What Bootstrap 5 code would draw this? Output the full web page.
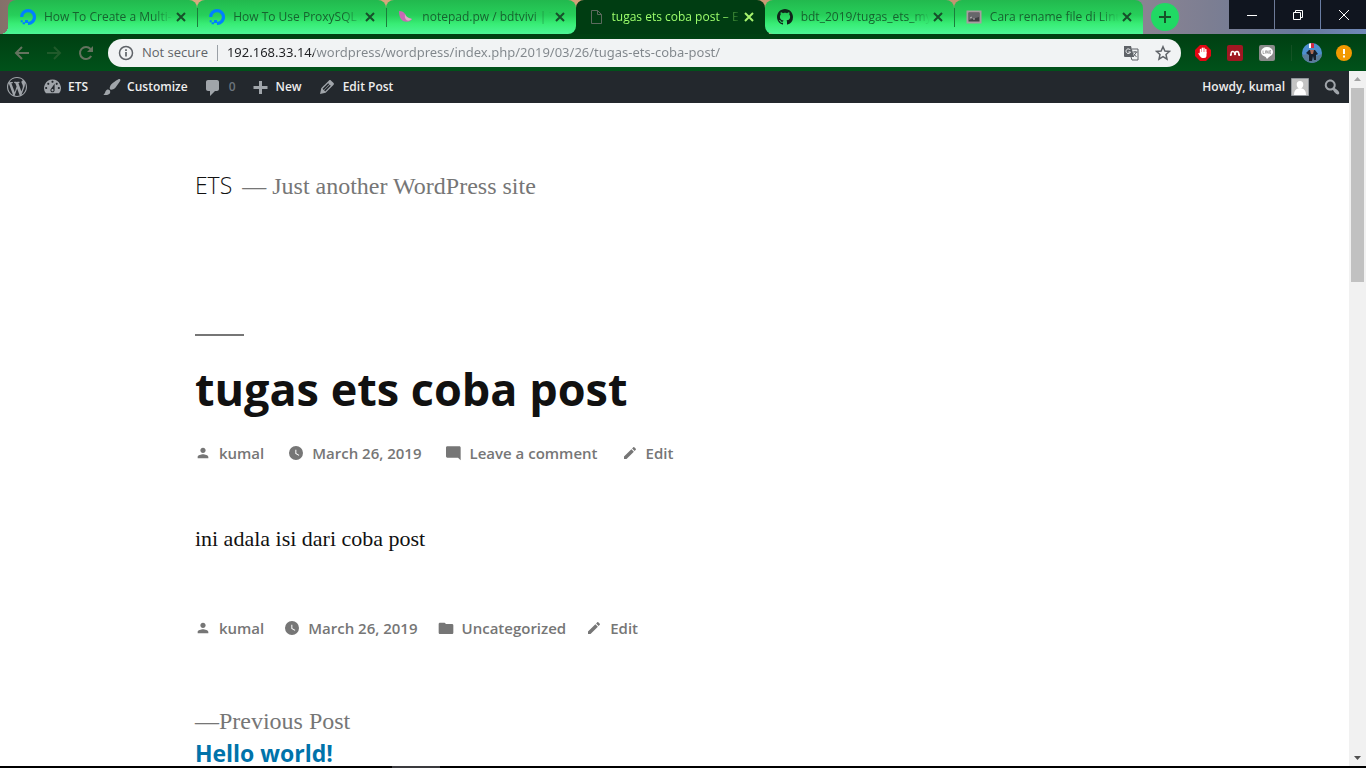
<!DOCTYPE html>
<html lang="en">
<head>
<meta charset="utf-8">
<meta name="viewport" content="width=device-width, initial-scale=1">
<title>tugas ets coba post – ETS</title>
<link rel="stylesheet" href="https://cdn.jsdelivr.net/npm/bootstrap@5.3.0/dist/css/bootstrap.min.css">
<style>
  :root { --ui: "Open Sans", "Noto Sans", sans-serif; --serif: "Liberation Serif", serif; --grey: #767676; }
  body { font-family: var(--ui); color: #111; }
  a { text-decoration: none; color: inherit; }
  button { border: 0; background: none; padding: 0; color: inherit; line-height: 1; }
  svg { display: block; flex: none; }

  .titlebar { height: 34px; padding-left: 8px; background: radial-gradient(circle at 0 0, transparent 8px, #48f08f 8px) 0 100% / 8px 8px no-repeat, linear-gradient(90deg, #84706a 0, #b08a6c 120px, #dcab80 200px, #d3a078 580px, #c49472 960px, #8b8493 1140px, #7c7e92 1210px, #68799b 1300px, #6f88b8 100%); }
  .strip { max-width: 1135px; min-width: 0; background: linear-gradient(transparent 50%, #003d12 50%) 50% 0 / 34% 34px no-repeat; }
  .tab-item { height: 34px; padding: 0 8px 0 12px; background: linear-gradient(#22b94e, #27cf5a 45%, #38ed75 70%, #4cf596); border-radius: 8px 8px 0 0; color: #17632f; font-size: 12px; min-width: 0; }
  .tab-item + .tab-item { background: linear-gradient(#1c7d3c, #1c7d3c) 0 8px / 1px 19px no-repeat, linear-gradient(#22b94e, #27cf5a 45%, #38ed75 70%, #4cf596); }
  .tab-item.before-current { border-bottom-right-radius: 8px; }
  .tab-item + .tab-item.current { background: #003d12; color: #9dff6d; }
  .tab-item + .tab-item.after-current { background: linear-gradient(#22b94e, #27cf5a 45%, #38ed75 70%, #4cf596); border-bottom-left-radius: 8px; }
  .tab-label { white-space: nowrap; overflow: hidden; margin-left: 8px; line-height: 20px; -webkit-mask-image: linear-gradient(90deg, #000 calc(100% - 20px), transparent); mask-image: linear-gradient(90deg, #000 calc(100% - 20px), transparent); }
  .tab-close { width: 16px; height: 16px; color: #17502a; display: grid; place-items: center; flex: none; }
  .current .tab-close { color: #a6f36e; }
  .tab-new { width: 28px; height: 28px; margin: 3px 0 0 8px; border-radius: 50%; background: #20d964; color: #175229; display: grid; place-items: center; flex: none; }
  .win-group { gap: 1px; }
  .win-btn { width: 45px; height: 29px; background: #10151f; color: #fff; display: grid; place-items: center; }

  .toolbar { height: 37px; background: linear-gradient(#003f12, #00521a); padding: 0 14px; color: #4f6e50; }
  .omnibox { height: 28px; border-radius: 14px; background: #f1f3f4; color: #5f6368; font-size: 14px; padding: 0 10px; margin: 0 14px; min-width: 0; }
  .omnibox .secure { font-size: 13px; white-space: nowrap; }
  .omnibox .rule { width: 1px; height: 16px; background: #9aa0a6; margin: 0 9px; }
  .omnibox input { border: 0; outline: 0; padding: 0; min-width: 0; font-family: "Noto Sans", sans-serif; font-size: 13px; color: transparent; background: linear-gradient(90deg, #202124 87px, #80868b 87px); -webkit-background-clip: text; background-clip: text; }
  .profile { margin: 0 14px 0 10px; }

  .pane { min-height: 0; }
  .adminbar { height: 32px; background: #23282d; color: #eee; font-size: 12px; font-weight: 600; padding: 0 8px 0 6px; }
  .adminbar svg { fill: #a0a5aa; }
  .adminbar a { display: flex; align-items: center; gap: 6px; white-space: nowrap; }
  .adminbar .menu { gap: 15px; }
  .adminbar .account { gap: 14px; }

  .site { padding: 65px 16px 0 calc(10% + 60px); min-height: 0; }
  .branding { line-height: 34px; color: var(--grey); margin-bottom: 131px; gap: 10px; }
  .branding a { color: #111; font-size: 23px; font-weight: 300; }
  .branding .tagline { font-family: var(--serif); font-size: 24px; }
  .dash { width: 49px; height: 2px; background: var(--grey); }
  .entry-title { font-size: 45px; line-height: 56px; font-weight: 700; margin: 25px 0 24px; }
  .meta { font-size: 15px; line-height: 24px; font-weight: 600; color: var(--grey); gap: 24px; }
  .meta.foot { gap: 20px; }
  .meta a { display: flex; align-items: center; gap: 8px; white-space: nowrap; }
  .meta svg { fill: var(--grey); }
  .entry-text { font-family: var(--serif); font-size: 22px; line-height: 32px; margin: 58px 0 61px; }
  .prev { margin-top: 65px; line-height: 32px; display: block; }
  .prev .kind { font-family: var(--serif); font-size: 24px; color: var(--grey); display: block; }
  .prev .name { font-size: 23px; font-weight: 700; color: #0073aa; }

  .scroll { width: 17px; background: #f1f1f1; padding: 6px 0; }
  .scroll .thumb { width: 13px; height: 194px; background: #c1c1c1; margin-top: 7px; }
  .taskline { height: 2px; background: #000; padding-left: 392px; flex: none; }
  .taskline i { display: block; width: 48px; height: 2px; background: #3a3a3e; }
</style>
</head>
<body class="vh-100 d-flex flex-column overflow-hidden">

<svg class="d-none">
  <symbol id="x" viewBox="0 0 10 10"><path d="M1 1l8 8M9 1L1 9" stroke="currentColor" stroke-width="2"/></symbol>
  <symbol id="ocean" viewBox="0 0 16 16"><path d="M8 14.400A6.400 6.400 0 1 0 1.700 8" fill="none" stroke="#0080ff" stroke-width="3.200"/><path d="M5 11h3v3H5zM2.600 13.300H5v2H2.600zM.7 11.200h2v2h-2z" fill="#0080ff"/></symbol>
  <symbol id="person" viewBox="0 0 24 24"><path d="M12 12c2.210 0 4-1.790 4-4s-1.790-4-4-4-4 1.790-4 4 1.790 4 4 4zm0 2c-2.670 0-8 1.340-8 4v2h16v-2c0-2.660-5.330-4-8-4z"/></symbol>
  <symbol id="clock" viewBox="0 0 24 24"><path fill-rule="evenodd" d="M12 1.500a10.500 10.500 0 1 0 0 21 10.500 10.500 0 0 0 0-21zM16.200 16.200L11 13V7h1.500v5.200l4.500 2.700-.8 1.300z"/></symbol>
  <symbol id="pen" viewBox="0 0 24 24"><path d="M3 17.250V21h3.750L17.810 9.940l-3.750-3.750L3 17.250zM20.710 7.040c.39-.39.39-1.020 0-1.410l-2.340-2.340c-.39-.39-1.020-.39-1.410 0l-1.830 1.830 3.750 3.750 1.830-1.830z"/></symbol>
</svg>

<header class="flex-shrink-0">
  <div class="titlebar d-flex">
    <nav class="strip d-flex flex-fill" aria-label="Tabs">
      <div class="tab-item d-flex align-items-center col">
        <svg width="16" height="16"><use href="#ocean"/></svg>
        <a href="#" class="tab-label flex-fill">How To Create a Multi-</a>
        <button class="tab-close" aria-label="Close tab"><svg width="10" height="10"><use href="#x"/></svg></button>
      </div>
      <div class="tab-item d-flex align-items-center col">
        <svg width="16" height="16"><use href="#ocean"/></svg>
        <a href="#" class="tab-label flex-fill">How To Use ProxySQL a</a>
        <button class="tab-close" aria-label="Close tab"><svg width="10" height="10"><use href="#x"/></svg></button>
      </div>
      <div class="tab-item before-current d-flex align-items-center col">
        <svg width="16" height="16" viewBox="0 0 16 16"><path d="M1 2c3 0 5 1 6 3 1 3 3 4 7 5-1 2-4 3-7 2.500C3 12 1 8 1 2z" fill="#c869b4"/><path d="M7 5c1 3 3 4 7 5-1 1-3 2-5 1.500C7 10 6.500 8 7 5z" fill="#dcaec4"/></svg>
        <a href="#" class="tab-label flex-fill">notepad.pw / bdtvivi | T</a>
        <button class="tab-close" aria-label="Close tab"><svg width="10" height="10"><use href="#x"/></svg></button>
      </div>
      <div class="tab-item current d-flex align-items-center col">
        <svg width="16" height="16" viewBox="0 0 16 16"><path d="M3.500 1.500h6l4 4v9h-10zM9.500 1.500v4h4" fill="none" stroke="#5c6a5e"/></svg>
        <a href="#" class="tab-label flex-fill">tugas ets coba post – E</a>
        <button class="tab-close" aria-label="Close tab"><svg width="10" height="10"><use href="#x"/></svg></button>
      </div>
      <div class="tab-item after-current d-flex align-items-center col">
        <svg width="16" height="16" viewBox="0 0 16 16"><path fill="#10251a" d="M8 0C3.580 0 0 3.580 0 8c0 3.540 2.290 6.530 5.470 7.590.4.07.55-.17.55-.38 0-.19-.01-.82-.01-1.490-2.010.37-2.530-.49-2.690-.94-.09-.23-.48-.94-.82-1.130-.28-.15-.68-.52-.01-.53.63-.01 1.080.58 1.230.82.72 1.210 1.870.87 2.330.66.07-.52.28-.87.51-1.070-1.780-.2-3.640-.89-3.640-3.950 0-.87.31-1.590.82-2.150-.08-.2-.36-1.020.08-2.120 0 0 .67-.21 2.200.82.64-.18 1.320-.27 2-.27s1.360.09 2 .27c1.530-1.040 2.200-.82 2.200-.82.44 1.100.16 1.920.08 2.120.51.56.82 1.270.82 2.150 0 3.070-1.870 3.750-3.650 3.950.29.25.54.73.54 1.480 0 1.070-.01 1.930-.01 2.200 0 .21.15.46.55.38A8.010 8.010 0 0 0 16 8c0-4.420-3.580-8-8-8z"/></svg>
        <a href="#" class="tab-label flex-fill">bdt_2019/tugas_ets_my</a>
        <button class="tab-close" aria-label="Close tab"><svg width="10" height="10"><use href="#x"/></svg></button>
      </div>
      <div class="tab-item d-flex align-items-center col">
        <svg width="16" height="16" viewBox="0 0 16 16"><rect x="1.500" y="2.500" width="13" height="11" fill="#3f3f42" stroke="#a79da0" stroke-width="2"/><path d="M3 4h10v4L3 11z" fill="#66666a"/><path d="M4 9l2-1M7 10h2" stroke="#bbb"/></svg>
        <a href="#" class="tab-label flex-fill">Cara rename file di Linu</a>
        <button class="tab-close" aria-label="Close tab"><svg width="10" height="10"><use href="#x"/></svg></button>
      </div>
    </nav>
    <button class="tab-new" aria-label="New tab"><svg width="12" height="12" viewBox="0 0 12 12"><path d="M6 0v12M0 6h12" stroke="currentColor" stroke-width="2"/></svg></button>
    <div class="win-group d-flex ms-auto">
      <button class="win-btn" aria-label="Minimize"><svg width="10" height="10"><path d="M0 5.500h10" stroke="#fff"/></svg></button>
      <button class="win-btn" aria-label="Restore"><svg width="10" height="10" viewBox="0 0 10 10" fill="none" stroke="#fff"><path d="M.5 2.500h7v7h-7zM2.500 2.500v-2h7v7h-2"/></svg></button>
      <button class="win-btn" aria-label="Close"><svg width="10" height="10" viewBox="0 0 10 10"><path d="M0 0l10 10M10 0L0 10" stroke="#fff"/></svg></button>
    </div>
  </div>

  <div class="toolbar d-flex align-items-center">
    <div class="d-flex gap-3">
      <button aria-label="Back"><svg width="16" height="16" viewBox="0 0 16 16" fill="none" stroke="#64735f" stroke-width="2"><path d="M15 8H2M8 2L2 8l6 6"/></svg></button>
      <button aria-label="Forward"><svg width="16" height="16" viewBox="0 0 16 16" fill="none" stroke="#205a2b" stroke-width="2"><path d="M1 8h13M8 2l6 6-6 6"/></svg></button>
      <button aria-label="Reload"><svg width="16" height="16" viewBox="0 0 16 16"><path d="M13.200 11A6 6 0 1 1 12.500 4" fill="none" stroke="#64735f" stroke-width="2"/><path d="M15 1v6H9z" fill="#64735f"/></svg></button>
    </div>
    <div class="omnibox d-flex align-items-center flex-fill">
      <svg width="16" height="16" viewBox="0 0 16 16"><circle cx="8" cy="8" r="6.500" fill="none" stroke="#5f6368" stroke-width="1.500"/><path d="M8 7v4.500M8 4.200v1.800" stroke="#5f6368" stroke-width="1.700"/></svg>
      <label class="secure ms-2" for="address">Not secure</label>
      <span class="rule"></span>
      <input id="address" type="text" class="flex-fill" value="192.168.33.14/wordpress/wordpress/index.php/2019/03/26/tugas-ets-coba-post/">
      <button class="me-3" aria-label="Translate"><svg width="16" height="16" viewBox="0 0 16 16"><path d="M1 1h7l3 11H2a1 1 0 0 1-1-1z" fill="#5f6368"/><path d="M9 4h6v11H9l-1-3" fill="none" stroke="#5f6368"/><path d="M9.500 7h5M12 6v1M10 12l3.500-5M10.500 8.500l3 3.500" stroke="#5f6368" fill="none"/><path d="M7.300 5A2.300 2.300 0 1 0 7.500 7H5.400" stroke="#f1f3f4" fill="none"/></svg></button>
      <button aria-label="Bookmark"><svg width="16" height="16" viewBox="0 0 16 16"><path d="M8 1.700l1.900 4.300 4.600.4-3.500 3.100 1 4.600-4-2.400-4 2.400 1-4.600L1.500 6.400l4.600-.4z" fill="none" stroke="#5f6368" stroke-width="1.500"/></svg></button>
    </div>
    <div class="d-flex align-items-center gap-3">
      <button aria-label="Ad blocker"><svg width="16" height="16" viewBox="0 0 16 16"><path d="M5 0h6l5 5v6l-5 5H5l-5-5V5z" fill="#e30613"/><path d="M5.500 8V4.500M7.300 8V3.200M9 8V3.200M10.800 8V4.500" stroke="#fff" stroke-width="1.400" stroke-linecap="round"/><path d="M4.800 7h6.700v3.500q0 2.500-2.500 2.500H7.500q-1.500 0-2.500-1.700L3.200 8.500l.9-.7 1 1z" fill="#fff"/></svg></button>
      <button aria-label="Reference manager"><svg width="16" height="16" viewBox="0 0 16 16"><rect width="16" height="16" rx="2" fill="#a01722"/><path d="M4 10q0-4 2-3.500T8 9q0-2.500 2-2.500T12 10" fill="none" stroke="#fff" stroke-width="1.500"/><circle cx="8" cy="9" r="1.200" fill="#fff"/><circle cx="3.800" cy="10" r="1" fill="#fff"/><circle cx="12.200" cy="10" r="1" fill="#fff"/></svg></button>
      <button aria-label="Messenger"><svg width="16" height="16" viewBox="0 0 16 16"><rect width="16" height="16" rx="2" fill="#8b8b8b"/><ellipse cx="8" cy="7" rx="6" ry="5" fill="#fff"/><path d="M6 11l2 3 4-4z" fill="#fff"/><path d="M4 5.500v3h1.500M6.500 5.500v3M7.700 8.500v-3l1.500 3v-3M12 5.500h-1.300v3H12M10.700 7H12" stroke="#8b8b8b" stroke-width=".7" fill="none"/></svg></button>
      <span class="vr"></span>
    </div>
    <button class="profile" aria-label="Profile"><svg width="20" height="20" viewBox="0 0 20 20"><clipPath id="pc"><circle cx="10" cy="10" r="10"/></clipPath><g clip-path="url(#pc)"><path d="M0 0h20v20H0z" fill="#4e8fcf"/><path d="M0 12l6-1 8 2 6-2v9H0z" fill="#5b7c99"/><path d="M7 0h2v5H7z" fill="#fff"/><path d="M9 0h3v5H9z" fill="#d22943"/><path d="M4 10l3-3h6l3 4-2 1v5h-2l-1-4-1 5H7v-6z" fill="#17202c"/><path d="M8 7h4l-1 4H9z" fill="#a86a55"/></g></svg></button>
    <button aria-label="Update"><svg width="16" height="16" viewBox="0 0 16 16"><circle cx="8" cy="8" r="8" fill="#f29900"/><path d="M8 4v5M8 10.500v2" stroke="#fff" stroke-width="2"/></svg></button>
  </div>
</header>

<div class="pane d-flex flex-fill bg-white">
  <div class="flex-fill d-flex flex-column overflow-hidden">
    <nav class="adminbar d-flex align-items-center justify-content-between flex-shrink-0" aria-label="Admin">
      <div class="menu d-flex">
        <a href="#" aria-label="WordPress"><svg width="22" height="20" viewBox="0 0 20 20"><path d="M20 10c0-5.510-4.490-10-10-10C4.480 0 0 4.490 0 10c0 5.520 4.480 10 10 10 5.510 0 10-4.480 10-10zM7.780 15.370L4.370 6.220c.55-.02 1.170-.08 1.170-.08.5-.06.44-1.130-.06-1.110 0 0-1.450.11-2.370.11-.18 0-.37 0-.58-.01C4.120 2.690 6.870 1.110 10 1.110c2.330 0 4.450.87 6.050 2.340-.68-.11-1.650.39-1.650 1.580 0 .74.45 1.360.9 2.100.35.61.55 1.360.55 2.460 0 1.490-1.400 5-1.400 5l-3.030-8.370c.54-.02.82-.17.82-.17.5-.05.44-1.250-.06-1.220 0 0-1.440.12-2.380.12-.87 0-2.330-.12-2.330-.12-.5-.03-.56 1.200-.06 1.220l.92.08 1.260 3.410zM17.410 10c.24-.64.74-1.870.43-4.250.7 1.290 1.050 2.710 1.050 4.250 0 3.290-1.730 6.240-4.400 7.780.97-2.590 1.940-5.200 2.920-7.780zM6.100 18.090C3.120 16.650 1.110 13.530 1.110 10c0-1.300.23-2.480.72-3.590C3.250 10.300 4.670 14.200 6.100 18.090zm4.030-6.630l2.580 6.980c-.86.29-1.760.45-2.710.45-.79 0-1.570-.11-2.290-.33.81-2.380 1.620-4.740 2.420-7.100z"/></svg></a>
        <a href="#"><svg width="19" height="20" viewBox="1 1 18 18"><path fill-rule="evenodd" d="M3.760 16h12.480A7.998 7.998 0 0 0 10 3a7.998 7.998 0 0 0-6.240 13zM10 4c.55 0 1 .45 1 1s-.45 1-1 1-1-.45-1-1 .45-1 1-1zM6 6c.55 0 1 .45 1 1s-.45 1-1 1-1-.45-1-1 .45-1 1-1zm8 0c.55 0 1 .45 1 1s-.45 1-1 1-1-.45-1-1 .45-1 1-1zm-5.370 5.550L12 7v6c0 1.100-.9 2-2 2s-2-.9-2-2c0-.57.24-1.080.63-1.450zM4 10c.55 0 1 .45 1 1s-.45 1-1 1-1-.45-1-1 .45-1 1-1zm12 0c.55 0 1 .45 1 1s-.45 1-1 1-1-.45-1-1 .45-1 1-1zm-5 3c0-.55-.45-1-1-1s-1 .45-1 1 .45 1 1 1 1-.45 1-1z"/></svg><span>ETS</span></a>
        <a href="#"><svg width="18" height="20" viewBox="1 1 18 18"><path d="M18.330 3.570s.27-.8-.31-1.360c-.53-.52-1.220-.24-1.220-.24-.61.3-5.760 3.470-7.670 5.570-.86.96-2.060 3.790-1.090 4.820.92.98 3.960-.17 4.790-1 2.060-2.060 5.210-7.170 5.500-7.790zM1.400 17.650c2.370-1.560 1.460-3.410 3.230-4.640.93-.65 2.220-.62 3.080.29.63.67.8 2.570-.16 3.460-1.570 1.450-4 1.550-6.150.89z"/></svg><span>Customize</span></a>
        <a href="#" aria-label="0 comments"><svg width="20" height="20" viewBox="0 0 20 20"><path d="M5 2h9c1.100 0 2 .9 2 2v7c0 1.100-.9 2-2 2h-2l-5 5v-5H5c-1.100 0-2-.9-2-2V4c0-1.100.9-2 2-2z" transform="translate(0 1)"/></svg><span class="text-secondary">0</span></a>
        <a href="#"><svg width="19" height="20" viewBox="0 0 19 20"><path d="M8 4h3v5h5.500v3H11v5H8v-5H2.500V9H8z"/></svg><span>New</span></a>
        <a href="#"><svg width="20" height="20" viewBox="0 0 20 20"><path d="M13.890 3.390l2.710 2.720c.46.46.42 1.240.03 1.640l-8.010 8.020-5.560 1.160 1.160-5.580s7.600-7.630 7.990-8.030c.39-.39 1.220-.39 1.680.07zm-2.730 2.790l-5.590 5.610 1.110 1.110 5.540-5.650zm-2.970 8.230l5.580-5.600-1.070-1.080-5.590 5.600z"/></svg><span>Edit Post</span></a>
      </div>
      <div class="account d-flex">
        <a href="#"><span>Howdy, kumal</span><svg width="18" height="18" viewBox="0 0 18 18"><path fill="#c3c3c3" stroke="#90959a" d="M.5.5h17v17H.5z"/><path d="M9 3c2.200 0 3.300 1.500 3.300 3.500S11.200 10.500 9 10.500 5.700 8.500 5.700 6.500 6.800 3 9 3zM3 17c0-4 1.500-6 4-6.500h4c2.500.5 4 2.500 4 6.500z" fill="#fff"/></svg></a>
        <a href="#" aria-label="Search"><svg width="18" height="20" viewBox="1 0 18 20"><path d="M12.140 4.180c1.870 1.870 2.110 4.750.72 6.890.12.1.22.21.36.31.2.16.47.36.81.59.34.24.56.39.66.47.42.31.73.57.94.78.32.32.6.65.84 1 .25.35.44.69.59 1.040.14.35.21.68.18 1-.02.32-.14.59-.36.81s-.49.34-.81.36c-.31.02-.65-.04-.99-.19-.35-.14-.7-.34-1.040-.59-.35-.24-.68-.52-1-.84-.21-.21-.47-.52-.77-.93-.1-.13-.25-.35-.47-.66-.22-.32-.4-.57-.56-.78-.16-.2-.29-.35-.44-.5-2.070 1.090-4.690.76-6.440-.98-2.140-2.150-2.140-5.640 0-7.780 2.150-2.150 5.630-2.150 7.780 0zm-1.410 6.360c1.360-1.370 1.360-3.580 0-4.950-1.370-1.370-3.590-1.370-4.950 0-1.370 1.370-1.370 3.580 0 4.950 1.360 1.370 3.580 1.370 4.950 0z"/></svg></a>
      </div>
    </nav>

    <main class="site flex-fill overflow-hidden">
      <div class="branding d-flex align-items-baseline"><a href="#">ETS</a><span class="tagline">— Just another WordPress site</span></div>
      <article>
        <div class="dash"></div>
        <h1 class="entry-title">tugas ets coba post</h1>
        <div class="meta d-flex flex-wrap">
          <a href="#"><svg width="16" height="16"><use href="#person"/></svg>kumal</a>
          <a href="#"><svg width="16" height="16"><use href="#clock"/></svg>March 26, 2019</a>
          <a href="#"><svg width="16" height="16" viewBox="0 0 24 24"><path d="M21.990 4c0-1.100-.89-2-1.990-2H2C.9 2 0 2.900 0 4v13c0 1.100.9 2 2 2h16l4 4-.01-19z"/></svg>Leave a comment</a>
          <a href="#"><svg width="16" height="16"><use href="#pen"/></svg>Edit</a>
        </div>
        <p class="entry-text">ini adala isi dari coba post</p>
        <footer class="meta foot d-flex flex-wrap">
          <a href="#"><svg width="16" height="16"><use href="#person"/></svg>kumal</a>
          <a href="#"><svg width="16" height="16"><use href="#clock"/></svg>March 26, 2019</a>
          <a href="#"><svg width="16" height="16" viewBox="0 0 24 24"><path d="M10 4H3c-1.100 0-2 .9-2 2v13c0 1.100.9 2 2 2h18c1.100 0 2-.9 2-2V8c0-1.100-.9-2-2-2h-9l-2-2z"/></svg>Uncategorized</a>
          <a href="#"><svg width="16" height="16"><use href="#pen"/></svg>Edit</a>
        </footer>
      </article>
      <a href="#" class="prev"><span class="kind">—Previous Post</span><span class="name">Hello world!</span></a>
    </main>
  </div>
  <div class="scroll d-flex flex-column align-items-center" aria-hidden="true">
    <svg width="7" height="4" viewBox="0 0 7 4"><path d="M0 4l3.500-4L7 4z" fill="#a3a3a3"/></svg>
    <div class="thumb"></div>
    <svg class="mt-auto" width="7" height="4" viewBox="0 0 7 4"><path d="M0 0l3.500 4L7 0z" fill="#505050"/></svg>
  </div>
</div>
<div class="taskline"><i></i></div>

<script src="https://cdn.jsdelivr.net/npm/bootstrap@5.3.0/dist/js/bootstrap.bundle.min.js"></script>
</body>
</html>
